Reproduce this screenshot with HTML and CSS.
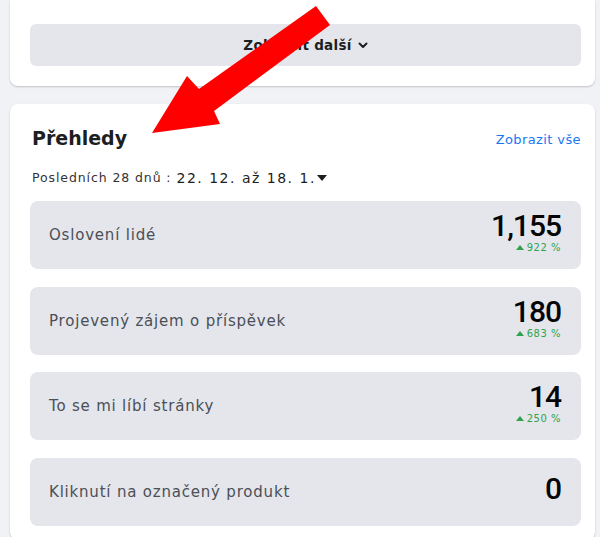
FILE: index.html
```html
<!DOCTYPE html>
<html lang="cs">
<head>
    <meta charset="UTF-8">
    <title>Přehledy</title>
    <link rel="stylesheet" href="styles.css">
</head>
<body>
    <div class="page">
        <div class="card card-top">
            <button class="more-btn">Zobrazit další <span class="chev">
                <svg width="10" height="7" viewBox="0 0 10 7"><path d="M1.5 1.5 L5 5 L8.5 1.5" fill="none" stroke="#1c1e21" stroke-width="2" stroke-linecap="round" stroke-linejoin="round"/></svg>
            </span></button>
        </div>

        <div class="card insights">
            <div class="insights-head">
                <h2>Přehledy</h2>
                <a class="see-all" href="#">Zobrazit vše</a>
            </div>
            <div class="period">
                <span class="period-label">Posledních 28 dnů :</span> 22. 12. až 18. 1.<span class="caret"></span>
            </div>

            <div class="stats">
                <div class="stat">
                    <span class="stat-label">Oslovení lidé</span>
                    <div class="stat-value">
                        <span class="num">1,155</span>
                        <span class="delta"><span class="up"></span>922 %</span>
                    </div>
                </div>
                <div class="stat">
                    <span class="stat-label">Projevený zájem o příspěvek</span>
                    <div class="stat-value">
                        <span class="num">180</span>
                        <span class="delta"><span class="up"></span>683 %</span>
                    </div>
                </div>
                <div class="stat">
                    <span class="stat-label">To se mi líbí stránky</span>
                    <div class="stat-value">
                        <span class="num">14</span>
                        <span class="delta"><span class="up"></span>250 %</span>
                    </div>
                </div>
                <div class="stat">
                    <span class="stat-label">Kliknutí na označený produkt</span>
                    <div class="stat-value">
                        <span class="num">0</span>
                    </div>
                </div>
            </div>
        </div>
    </div>

    <!-- red annotation arrow drawn over the page -->
    <svg class="arrow" width="600" height="140" viewBox="0 0 600 140">
        <polygon points="152,133 187,76 199,89 316,6 330,25 214,111 220,124" fill="#ff0000"/>
    </svg>
</body>
</html>
```

FILE: styles.css
```css
* {
    margin: 0;
    padding: 0;
    box-sizing: border-box;
}

body {
    background: #f0f2f5;
    font-family: 'DejaVu Sans', Verdana, sans-serif;
    color: #1c1e21;
    position: relative;
    overflow: hidden;
}

.page {
    padding: 0 5px 0 10px;
    display: flex;
    flex-direction: column;
    gap: 18px;
}

.card {
    background: #fff;
    border-radius: 8px;
    box-shadow: 0 1px 2px rgba(0, 0, 0, 0.2);
    padding: 0 14px 0 20px;
}

.card-top {
    border-radius: 0 0 8px 8px;
    padding-top: 24px;
    padding-bottom: 20px;
}

.more-btn {
    width: 100%;
    height: 42px;
    border: none;
    border-radius: 6px;
    background: #e4e6eb;
    font-family: inherit;
    font-size: 13.5px;
    font-weight: bold;
    letter-spacing: 0.3px;
    color: #1c1e21;
    display: flex;
    align-items: center;
    justify-content: center;
    gap: 6px;
}

.chev {
    display: flex;
}

.insights {
    padding-top: 20px;
    padding-bottom: 14px;
}

.insights-head {
    display: flex;
    justify-content: space-between;
    align-items: center;
    height: 28px;
    padding-left: 2px;
}

.insights-head h2 {
    font-size: 19px;
    font-weight: bold;
    color: #1c1e21;
}

.see-all {
    font-size: 13px;
    letter-spacing: 0.4px;
    color: #1877f2;
    text-decoration: none;
    margin-top: 3px;
}

.period {
    margin-top: 18px;
    padding-left: 2px;
    font-size: 14px;
    line-height: 16px;
    letter-spacing: 1.5px;
    color: #1c1e21;
    display: flex;
    align-items: center;
    gap: 5px;
}

.period-label {
    font-size: 12.5px;
    letter-spacing: 0.9px;
    color: #333;
}

.caret {
    width: 0;
    height: 0;
    border-left: 5px solid transparent;
    border-right: 5px solid transparent;
    border-top: 6px solid #1c1e21;
    margin-left: -4px;
}

.stats {
    margin-top: 15px;
    display: flex;
    flex-direction: column;
    gap: 17.5px;
}

.stat {
    background: #e4e6eb;
    border-radius: 8px;
    height: 68px;
    padding: 0 20px 0 19px;
    display: flex;
    align-items: center;
    justify-content: space-between;
}

.stat-label {
    font-size: 15px;
    letter-spacing: 0.8px;
    color: #4b4f56;
}

.stat-value {
    display: flex;
    flex-direction: column;
    align-items: flex-end;
    margin-top: -6px;
}

.num {
    font-family: Roboto, 'Liberation Sans', sans-serif;
    font-size: 30px;
    font-weight: 500;
    letter-spacing: -1px;
    line-height: 30px;
    color: #050505;
}

.delta {
    font-size: 10px;
    letter-spacing: 0.5px;
    color: #31a24c;
    display: flex;
    align-items: center;
    gap: 3px;
    margin-top: 1px;
}

.up {
    width: 0;
    height: 0;
    border-left: 4px solid transparent;
    border-right: 4px solid transparent;
    border-bottom: 5px solid #31a24c;
}

.arrow {
    position: absolute;
    top: 0;
    left: 0;
}
```
